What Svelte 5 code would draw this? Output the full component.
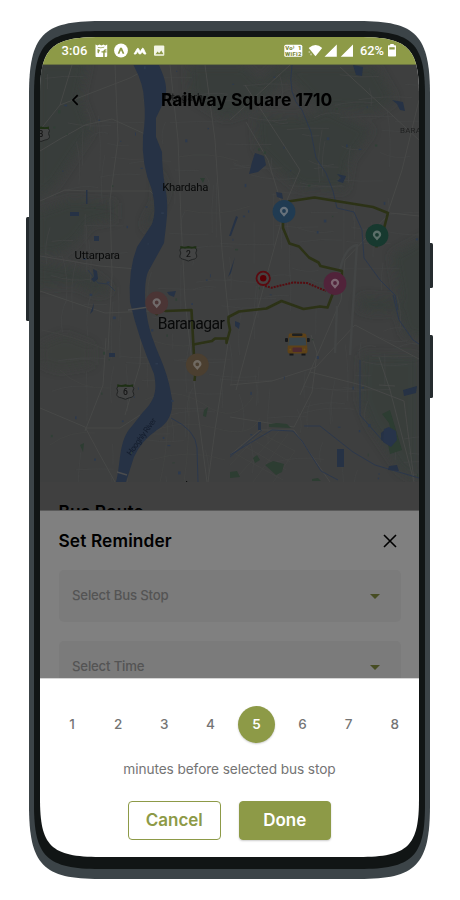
<script>
  const minutes = [1, 2, 3, 4, 5, 6, 7, 8];
  const fields = ['Select Bus Stop', 'Select Time'];
  let selected = $state(5);

  const pins = [
    { x: 284, y: 211.5, fill: '#203b52', hole: '#66717b' },
    { x: 377, y: 235.3, fill: '#17392f', hole: '#5b6f69' },
    { x: 335, y: 283.5, fill: '#51233a', hole: '#7d6571' },
    { x: 156.7, y: 303, fill: '#4b3535', hole: '#706a6a' },
    { x: 197.3, y: 364.8, fill: '#4b3f30', hole: '#706a62' }
  ];
  const shields = [
    { x: 188.3, y: 253, label: '2' },
    { x: 125.3, y: 391.3, label: '6' },
    { x: 41, y: 133.5, label: '3' }
  ];

  // Scatter of side streets and ponds, repeatable between renders.
  let seed = 11;
  const rnd = () => (seed = (seed * 16807) % 2147483647) / 2147483647;
  const streets = Array.from({ length: 190 }, () => {
    const x = 45 + rnd() * 370;
    const y = 70 + rnd() * 410;
    const v = rnd() > 0.5;
    const l = 15 + rnd() * 42;
    const b = (rnd() - 0.5) * 16;
    return v ? `M${x} ${y}q${b} ${l / 2} ${b / 2} ${l}` : `M${x} ${y}q${l / 2} ${b} ${l} ${b / 2}`;
  }).join('');
  const ponds = Array.from({ length: 85 }, () => ({
    x: 42 + rnd() * 375,
    y: 66 + rnd() * 412,
    w: 0.8 + rnd() * 2.2,
    h: 0.8 + rnd() * 2.4,
    g: rnd() > 0.75
  }));
</script>

<div class="phone">
  <svg class="frame" width="460" height="900" viewBox="0 0 460 900" aria-hidden="true">
    <rect x="26" y="217" width="5" height="104" rx="1.5" fill="#252b2e" />
    <rect x="428" y="243" width="5" height="45" rx="1.5" fill="#252b2e" />
    <rect x="428" y="335" width="5" height="63" rx="1.5" fill="#252b2e" />
    <path fill="#3c4448" d="M29 95C29 35 43 21 100 21H359C416 21 430 35 430 95V805C430 865 416 879 359 879H100C43 879 29 865 29 805Z" />
    <path fill="#111515" d="M34 95C34 43 47 31 100 31H359C412 31 425 43 425 95V805C425 857 412 869 359 869H100C47 869 34 857 34 805Z" />
  </svg>

  <main class="screen">
    <header class="status">
      <span class="time">3:06</span>
      <svg class="apps" width="72" height="15" viewBox="0 0 72 15" fill="#fff">
        <path d="M.5 1.5l2 1 2-1 2 1 2-1 1.700 1 2-1V13a1 1 0 0 1-1 1H1.500a1 1 0 0 1-1-1z" />
        <path d="M2.500 3.800q3.500 1.500 7-.3l-.5 1q-3 1.200-6 .3zM2.500 6l2.500 1-1.500 3.500-1-1zM11.500 6.200q-3-.4-3.200 2H6.500v1.300h1.700V14h1.500V9.500h1.800V8.200H9.800q.1-.9 1.700-.7z" fill="#8d9a47" />
        <circle cx="26" cy="7.500" r="6.900" />
        <path d="M22.700 10.500l2.200-5.300q1.100-1.400 2.200 0l2.200 5.300-1.500.6L26 7.200l-1.800 3.900z" fill="#8d9a47" />
        <path d="M39 11l3.200-5.300q.8-1 1.400 0l1.500 3.200 2-3.300q.8-1 1.400.1L51 11l-1.800.1-2-2.300-1.600 2.200h-1.300l-1.900-2.500L41 11z" stroke="#fff" stroke-width=".8" />
        <rect x="59" y="2.500" width="10.300" height="10.300" rx="1" fill="#f3f5e6" />
        <path d="M60.500 11.200l2.100-2.700 1.500 1.700 2.200-2.800 2.200 3.800z" fill="#8d9a47" />
      </svg>
      <svg class="signals" width="70" height="15" viewBox="0 0 70 15" fill="#fff">
        <rect x=".3" y="1.700" width="18" height="12" rx="1.500" />
        <g fill="#7f8b40" font-weight="900" font-size="6">
          <text x="1.300" y="7" textLength="9">Vo⁾</text>
          <text x="14" y="7">1</text>
          <text x="1" y="12.900" textLength="16.500">WiFi2</text>
        </g>
        <path d="M24.700 5q7-5.800 13.500 0L31.500 13.300z" />
        <path d="M24.600 8.300h1.500v1.500h-1.500zM26.300 10.500h1.500v1.700h-1.500z" opacity=".5" />
        <path d="M52.800 1.500V13.700H40.500zM69 1.500V13.700H56.700z" />
      </svg>
      <span class="battery">62%</span>
      <svg width="8" height="13" viewBox="0 0 8 13"><path fill="#fff" d="M2.200 0h3.600v1.300H7.300q.7 0 .7.700v9.800q0 .7-.7.700H.7q-.7 0-.7-.7V2q0-.7.7-.7h1.500z" /><path fill="#8d9a47" d="M1.300 3.300h5.400v2.200H1.300z" /></svg>
    </header>

    <section class="map">
      <svg width="379" height="417" viewBox="40 65 379 417">
        <defs>
          <filter id="soft"><feGaussianBlur stdDeviation="5" /></filter>
        </defs>
        <rect x="40" y="65" width="379" height="417" fill="#3e3f3f" />
        <g fill="#383e3b" filter="url(#soft)">
          <path d="M36 60H88L80 98 92 130 75 155 55 185 36 200z" />
          <path d="M36 212L70 200 114 203 114 219 90 223 76 242 60 253 36 255z" />
          <path d="M36 262L75 268 95 276 112 290 98 294 75 284 36 286z" />
          <path d="M40 345L65 335 92 345 92 365 60 370 40 364z" opacity=".55" />
          <path d="M188 65H245L260 82 275 65H375L395 100 375 112 330 108 322 112 290 78 250 110 225 118 190 95z" />
          <path d="M255 115L295 118 330 110 372 130 350 160 345 190 300 188 280 172 258 150z" />
          <path d="M392 255L430 235V340L405 335 398 310 375 312 358 308 362 297 400 300z" />
          <path d="M362 355L419 356V482L400 470 370 425 360 400z" opacity=".8" />
          <path d="M158 170L166 192 153 220 147 232 145 222 156 202z" />
        </g>
        <path d={streets} fill="none" stroke="#444545" stroke-width=".65" />
        <g fill="none" stroke="#484948" stroke-width=".9">
          <path d="M40 151L60 139 85 125 112 119 145 134M72 65L60 105 40 130M60 105L130 78 150 67M40 201L65 190 90 191 150 191 155 196M40 256L100 266 150 270M115 65L118 140 110 200 112 275 108 350M245 85L300 170 282 212M246 122L268 160 284 212 252 330 236 390" />
          <path d="M40 291L105 313 150 311M230 120L290 65M340 67L419 140M419 100L402 170 388 212M419 216L390 213 345 260 341 300 300 395M230 385L272 381 316 367 355 325 419 359M230 417L294 427 312 392 317 353 311 335M310 372L365 386 404 401 414 480M379 357L390 390 414 482M379 385L395 386M40 408L85 427 100 455 115 482M106 338L103 385 85 431M85 428L120 428 140 415M142 310L140 365 125 415M170 65L178 140 181 220 185 300 195 390 207 482M205 65L215 140 222 250 230 330 215 430 208 482M230 455L260 430 294 430 330 482" />
        </g>
        <g stroke="#434545" stroke-width="2.500" fill="none"><path d="M340 270Q345 247 357 245L350 355M337 306L335 353" /></g>
        <g fill="none" stroke="#434544" stroke-width=".7">
          <path d="M230 465l30-32 35 18-28 40M239 475l40-44M253 482l35-48M234 453l49 27M241 444l45 26M250 438l40 24M145 400q30-15 60 5t48-8M145 435q35-18 70-7t45-10M160 482q10-40 8-105M184 482q6-40 5-90M150 460q40-12 75 0M60 370q20 20 50 18M42 330q30 6 65 20M50 445q20-15 45-12M150 340q32 12 70 0M162 90q20 14 85 10M178 157q30-6 60 4M184 210q35 8 66-4" />
        </g>
        <g fill="none" stroke="#2c384c" stroke-width="1">
          <path d="M292 65Q287 95 302 110L311 132 316 158 326 173 333 191 337 208 354 212 362 230 364 258 380 280 395 295 398 310" />
          <path d="M393 295L399 320 413 340 419 344M230 455L272 430 293 431 302 441 321 471 338 480M304 426L320 426 353 452 375 465 419 478M171 418Q196 430 197 448L198 482M360 360V415L382 440" />
          <path d="M88 270L98 283 108 284 115 291M230 457L262 430" opacity=".8" />
        </g>
        <g fill="#263245">
          <path d="M133.500 65Q144 85 144 100 146 117 143 136 141 164 152 190 157 212 152 224L137 247Q128 270 130 302 138 337 154 374C158 393 153 402 143 412L132 426C118 440 121 465 116 482H126L134 457Q141 441 157 430 174 420 172 399C168 370 158 355 154 342 144 317 143 284 148 272L164 243 166 226Q169 203 165 187 162 168 162 152L156 137V118Q162 107 166 94C167 81 162 73 159 65z" />
          <path d="M353 65l10 2-1 9-6-1zM255 153l9 3 2 9-8 7-9 2 3-12zM276 192l6 1 1 6-6-2zM337 174l9 2-3 7-6-2 4-3zM94 236h5v5h-5zM86 190h1.500v14H86zM70 212h9v4h-9zM93 269l4 2 1 8-4 3-3-3 3-2zM109 353h6v4h-6zM235 321l5 2-1 6-4-3zM381 433l5-4 8-1 2 10-4 9-11-7zM403 390l14-4-1 7-12 3zM337 449h7v18h-7zM389 466l8-1 2 6-11-1zM238 217l-7 19h-2l7-20zM235 257l-7 20 3-4zM258 422h3v8h-3zM94 303l-4 11 3-3zM167 292l9-1-2 6-5-2zM392 100l11 2 2 9-5-1-3-6z" />
        </g>
        {#each ponds as p}
          <rect x={p.x} y={p.y} width={p.w} height={p.h} fill={p.g ? '#304036' : '#2d3a4e'} />
        {/each}
        <g fill="#2d3d32">
          <path d="M382 414l8-4 12 40-12 4-2-10 4-8-3-13zM265 465l8-4 11 3-2 8-6 3zM269 424l8-1 10 1 4 4-22-1zM253 458l4-3 3 5-5 3zM230 472l7-1 3 6-10 1zM200 178h5l-2 5zM204 410l4-3-2 10-3-1zM80 445l4-2-1 9zM312 479l6-1 3 3h-9z" />
        </g>
        <path d="M384 429l5-2 7 4 1 9-6 7-8-5z" fill="#27344a" />
        <path d="M128 310L149 307M117 472L127 475" stroke="#4b4d4e" stroke-width="1.500" />

        {#each shields as s}
          <g transform="translate({s.x} {s.y})">
            <path d="M-6.500-6q3.200 2 6.500 0 3.300 2 6.500 0l2 3q-2 3 0 6 0 3-4.500 3.500L0 8-4 6.500Q-8.500 6-8.500 3q2-3 0-6z" fill="#434444" stroke="#222424" stroke-width="1" />
            <path d="M-8-7q4 1.500 8 0 4 1.500 8 0v2.500H-8z" fill="#1e3014" />
            <text y="3.500" text-anchor="middle" font-size="8.500" font-weight="500" fill="#151515">{s.label}</text>
          </g>
        {/each}

        <g fill="none" stroke="#2c3216" stroke-width="2.600" stroke-linejoin="round">
          <path d="M288 201.500L314.500 197.500 373 207 388 213 383 232M376.500 240V247.500M283 217L283 228 289.500 243.500 299 246.500 309 257.500 318.500 262.500 320.500 266 342 271V280M335 288L327.500 307.500 320 306.500 303.500 309 281.500 301 266.500 308.500 239 311.500 228.500 317V322L230 330 226.500 343V338.500H215L212 341 193.500 344.500" />
          <path d="M156 315L160 309 166 311 191.500 310 195 375 194.500 381" />
        </g>
        <path d="M265 286L271.500 287.800 293 282.500 307 283 326 291" fill="none" stroke="#560c10" stroke-width="2" stroke-dasharray="2 1" />
        <circle cx="263.200" cy="278.300" r="6.700" fill="#474141" stroke="#5b0a10" stroke-width="1.800" />
        <circle cx="263.200" cy="278.300" r="3.200" fill="#590006" />
        {#each pins as p}
          <g transform="translate({p.x} {p.y})">
            <circle r="11.400" fill={p.fill} />
            <path fill-rule="evenodd" fill={p.hole} d="M0 5.200C-2 2.600-4.200 1.200-4.200-.6a4.200 4.200 0 0 1 8.400 0C4.200 1.200 2 2.600 0 5.200zM0-2.400a1.900 1.900 0 1 0 0 3.800 1.900 1.900 0 0 0 0-3.800z" />
          </g>
        {/each}
        <g transform="translate(297.500 344.500)">
          <rect x="-12.500" y="-6.500" width="3" height="4" rx="1" fill="#17191b" /><rect x="9.300" y="-6.500" width="3" height="4" rx="1" fill="#17191b" />
          <path d="M-8 8h4v3h-4zM4 8h4v3H4z" fill="#15171a" />
          <path d="M-8-11H7q2 0 2 3l1 14q0 3-2 3H-8q-2 0-2-3l1-14q0-3 1-3z" fill="#5e4218" />
          <rect x="-5.500" y="-11" width="10.500" height="2.500" rx="1" fill="#1e2021" />
          <path d="M-8.500-7H8L9 1H-9.500z" fill="#38444a" />
          <rect x="-5" y="3" width="9.500" height="4.500" rx="1" fill="#4c2930" />
          <circle cx="-7.300" cy="5" r="1" fill="#6b4c20" /><circle cx="7" cy="5" r="1" fill="#6b4c20" />
        </g>

        <g class="labels">
          <text x="162.300" y="191.300" font-size="11.300" textLength="46">Khardaha</text>
          <text x="74.500" y="259.300" font-size="11.300" textLength="45.500">Uttarpara</text>
          <text x="157.800" y="329" font-size="15.700" textLength="67">Baranagar</text>
          <text x="162" y="101" font-size="11" textLength="41" opacity=".7">Titagarh</text>
          <text x="400" y="133.300" font-size="8" letter-spacing=".2" fill="#202121">BARASAT</text>
          <text x="150.500" y="490.800" font-size="12">Howrah</text>
          <text font-size="8" fill="#141d2d" transform="translate(130.800 456) rotate(-54)" textLength="44">Hooghly River</text>
        </g>
      </svg>
      <div class="bar">
        <svg width="9" height="12" viewBox="0 0 9 12"><path d="M6.700 1.200L2 6l4.700 4.800" fill="none" stroke="#000" stroke-width="1.700" /></svg>
        <h1>Railway Square 1710</h1>
      </div>
    </section>

    <section class="route"><h2>Bus Route</h2></section>

    <section class="sheet">
      <div class="sheet-head">
        <h2>Set Reminder</h2>
        <svg width="14" height="14" viewBox="0 0 14 14"><path d="M1 1L13 13M13 1L1 13" stroke="#000" stroke-width="1.600" /></svg>
      </div>
      {#each fields as f}
        <div class="field">
          <span>{f}</span>
          <svg width="10" height="5" viewBox="0 0 10 5"><path d="M0 0h10L5 5z" fill="#474d23" /></svg>
        </div>
      {/each}
    </section>

    <section class="picker">
      <div class="minutes">
        {#each minutes as m}
          <button class="cell" class:on={m === selected} onclick={() => (selected = m)}><span>{m}</span></button>
        {/each}
      </div>
      <p>minutes before selected bus stop</p>
      <div class="actions">
        <button class="btn outline">Cancel</button>
        <button class="btn solid">Done</button>
      </div>
    </section>
  </main>
</div>

<style>
  :global(body) { background: #fff; }
  * { box-sizing: border-box; }
  h1, h2, p { margin: 0; }
  button { font: inherit; border: 0; background: none; padding: 0; }
  svg { display: block; flex: none; }
  .phone {
    position: relative;
    width: 460px;
    height: 900px;
    padding: 37px 41px 43px 40px;
    font-family: Inter, "Liberation Sans", sans-serif;
  }
  .frame { position: absolute; inset: 0; }
  .screen {
    position: relative;
    display: flex;
    flex-direction: column;
    width: 379px;
    height: 820px;
    overflow: hidden;
    background: #fff;
    clip-path: path("M0 58C0 11 11 0 60 0H319C368 0 379 11 379 58V762C379 809 368 820 319 820H60C11 820 0 809 0 762Z");
  }
  .status {
    display: flex;
    align-items: center;
    flex: none;
    height: 28px;
    padding: 0 23px 0 21.500px;
    background: #8d9a47;
    border-bottom: 1px solid #6a7341;
    color: #fff;
    font: 500 13px Roboto, sans-serif;
  }
  .time { width: 33px; letter-spacing: .1px; }
  .signals { margin-left: auto; margin-right: 6px; }
  .battery { width: 28px; font-size: 12.800px; }
  .map { position: relative; flex: none; height: 417px; overflow: hidden; }
  .labels { fill: #080909; }
  .map text { font-family: Roboto, sans-serif; }
  .bar {
    position: absolute;
    inset: 22px 0 auto 0;
    display: flex;
    align-items: center;
    height: 26px;
    padding-left: 31px;
  }
  h1 { margin-left: 81px; padding-bottom: 2px; font-size: 17.400px; font-weight: 700; letter-spacing: 0; white-space: nowrap; }
  .route { flex: none; height: 29px; padding: 19px 18px 0 18.500px; overflow: hidden; background: #404040; border-bottom: 1px solid #5a5a5a; }
  h2 { font-size: 17.300px; line-height: 22px; font-weight: 600; letter-spacing: .13px; }
  .sheet { flex: none; height: 167px; padding: 18px 18px 0 18.500px; overflow: hidden; background: #808080; }
  .sheet-head { display: flex; align-items: center; justify-content: space-between; height: 23px; padding-right: 4px; margin-bottom: 18px; }
  .field {
    display: flex;
    align-items: center;
    justify-content: space-between;
    height: 52px;
    margin-bottom: 19px;
    padding: 0 21px 0 13.500px;
    border-radius: 5px;
    background: #7b7b7b;
    color: #545454;
    font-size: 13.200px;
    font-weight: 500;
    letter-spacing: -.18px;
  }
  .field span { padding-bottom: 2px; }
  .picker { flex: 1; display: flex; flex-direction: column; align-items: center; border-top: 1px solid #d5d5d5; }
  .minutes { display: flex; align-self: flex-start; margin: 26.500px 0 0 9px; }
  .cell { display: grid; place-items: center; flex: none; width: 46.100px; height: 37px; color: #747474; font-size: 13.500px; font-weight: 500; }
  .cell span { display: grid; place-items: center; width: 37px; height: 37px; border-radius: 50%; }
  .on span { background: #8d9a47; color: #fff; font-weight: 600; box-shadow: 0 1px 2px #0003; }
  p { margin-top: 17px; color: #747474; font-size: 13.700px; line-height: 18px; letter-spacing: -.1px; white-space: nowrap; }
  .actions { display: flex; gap: 18px; margin-top: 23px; }
  .btn { width: 92.500px; height: 39px; border: 1px solid #8d9a47; border-radius: 4px; font-size: 17px; font-weight: 600; }
  .outline { color: #8d9a47; }
  .solid { background: #8d9a47; color: #fff; box-shadow: 0 1px 2px #0003; }
</style>
